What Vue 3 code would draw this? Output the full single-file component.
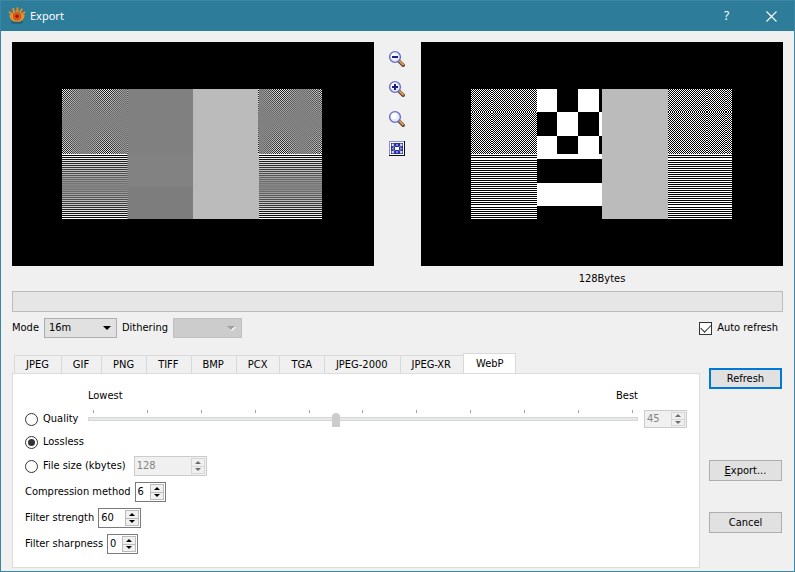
<script setup>
import { ref } from 'vue'

const tabs = ['JPEG', 'GIF', 'PNG', 'TIFF', 'BMP', 'PCX', 'TGA', 'JPEG-2000', 'JPEG-XR', 'WebP']
const activeTab = ref('WebP')
const mode = ref('16m')
const autoRefresh = ref(true)
const encoding = ref('lossless')
const quality = ref(45)
const fileSize = ref(128)
const filters = ref([
  { id: 'method', label: 'Compression method', value: 6, size: 'one' },
  { id: 'strength', label: 'Filter strength', value: 60, size: 'two' },
  { id: 'sharpness', label: 'Filter sharpness', value: 0, size: 'one' },
])
const lenses = [
  { label: 'Zoom out', sign: 'M4 7h6' },
  { label: 'Zoom in', sign: 'M4 7h6M7 4v6' },
  { label: 'Actual size', sign: '' },
]
</script>

<template>
  <div class="window">
    <header class="titlebar">
      <svg class="logo" width="18" height="18" viewBox="0 0 18 18">
        <ellipse cx="9" cy="15.500" rx="6.500" ry="1.300" fill="#245f76" />
        <g fill="none" stroke="#f08a1c" stroke-width="2" stroke-linecap="round">
          <path d="M6 4.500 5.200 2" />
          <path d="M9.300 3.600 9.500 1.200" />
          <path d="M12.400 4.500 13.600 2.400" />
          <path d="M3.400 6.800 1.600 5.200" />
          <path d="M14.800 6.800 16.400 5.400" />
        </g>
        <path d="M1.200 8.200Q4 8 5 5.600Q9 2.400 13 5.600Q14 8 16.800 8.200Q15.500 14.800 9 14.800Q2.500 14.800 1.200 8.200Z" fill="#f09024" />
        <circle cx="9" cy="9.200" r="4" fill="#8f4a2c" />
        <circle cx="9" cy="9.200" r="3.200" fill="#ea6a1c" />
        <circle cx="9" cy="9.200" r="2" fill="#b01208" />
      </svg>
      <h1>Export</h1>
      <button class="caption" type="button" aria-label="Help">?</button>
      <button class="caption" type="button" aria-label="Close">
        <svg width="11" height="11" viewBox="0 0 11 11"><path d="M.5.5l10 10M10.5.5l-10 10" stroke="#fff" stroke-width="1.1" /></svg>
      </button>
    </header>

    <main class="content">
      <section class="previews">
        <div class="preview">
          <svg width="260" height="130" viewBox="0 0 260 130" shape-rendering="crispEdges">
            <defs>
              <pattern id="checkA" width="2" height="2" patternUnits="userSpaceOnUse">
                <rect width="2" height="2" fill="#000" />
                <path d="M0 0h1v1h-1zM1 1h1v1h-1z" fill="#fff" />
              </pattern>
              <pattern id="linesA" width="2" height="2" patternUnits="userSpaceOnUse" y="1">
                <rect width="2" height="2" fill="#000" />
                <rect width="2" height="1" fill="#fff" />
              </pattern>
              <pattern id="linesB" width="2" height="2" patternUnits="userSpaceOnUse">
                <rect width="2" height="2" fill="#000" />
                <rect width="2" height="1" fill="#fff" />
              </pattern>
              <linearGradient id="fadeX" gradientUnits="userSpaceOnUse" x1="1" y1="0" x2="44" y2="0" spreadMethod="repeat">
                <stop offset="0" stop-color="#808080" stop-opacity="0" />
                <stop offset=".5" stop-color="#808080" />
                <stop offset="1" stop-color="#808080" stop-opacity="0" />
              </linearGradient>
              <linearGradient id="fadeX2" gradientUnits="userSpaceOnUse" x1="219" y1="0" x2="262" y2="0" spreadMethod="repeat">
                <stop offset="0" stop-color="#808080" stop-opacity="0" />
                <stop offset=".5" stop-color="#808080" />
                <stop offset="1" stop-color="#808080" stop-opacity="0" />
              </linearGradient>
              <linearGradient id="fadeY" x1="0" y1="0" x2="0" y2="1">
                <stop offset="0" stop-color="#808080" stop-opacity="0" />
                <stop offset=".5" stop-color="#808080" />
                <stop offset="1" stop-color="#808080" stop-opacity="0" />
              </linearGradient>
            </defs>
            <rect width="66" height="65" fill="url(#checkA)" />
            <rect width="65" height="65" fill="url(#fadeX)" />
            <rect width="66" height="65" fill="url(#fadeY)" />
            <rect y="65" width="66" height="32" fill="url(#linesA)" />
            <rect y="97" width="66" height="33" fill="url(#linesA)" />
            <rect y="65" width="66" height="65" fill="url(#fadeY)" />
            <rect x="65" width="1" height="130" fill="#808080" opacity=".5" />
            <rect x="66" width="65" height="65" fill="#808080" />
            <rect x="66" y="65" width="65" height="33" fill="#828282" />
            <rect x="66" y="98" width="65" height="32" fill="#7d7d7d" />
            <rect x="131" width="66" height="130" fill="#bbb" />
            <rect x="196" width="64" height="65" fill="url(#checkA)" />
            <rect x="197" width="63" height="65" fill="url(#fadeX2)" />
            <rect x="196" width="64" height="65" fill="url(#fadeY)" />
            <rect x="255" width="2" height="65" fill="#808080" opacity=".8" />
            <rect x="197" y="65" width="63" height="65" fill="url(#linesA)" />
            <rect x="197" y="65" width="63" height="65" fill="url(#fadeY)" />
          </svg>
        </div>

        <div class="tools">
          <button v-for="lens in lenses" :key="lens.label" type="button" :aria-label="lens.label">
            <svg width="18" height="18" viewBox="0 0 18 18">
              <path d="M11 11 15.200 15.200" stroke="#5f4034" stroke-width="3.600" stroke-linecap="round" />
              <path d="M11.300 10.800 15 14.500" stroke="#dd9a55" stroke-width="2" stroke-linecap="round" />
              <circle cx="7" cy="7" r="5.400" fill="#e6e9ff" stroke="#6670c4" stroke-width="1.400" />
              <circle cx="6" cy="6" r="3" fill="#fff" />
              <path :d="lens.sign" stroke="#191f8c" stroke-width="2" />
            </svg>
          </button>
          <button type="button" aria-label="Fit to window">
            <svg width="18" height="18" viewBox="0 0 18 18">
              <rect x="1" y="1" width="16" height="15" fill="#0c0c28" />
              <rect x="1" y="1" width="15" height="14" fill="#8890cc" />
              <rect x="2" y="2" width="14" height="13" fill="#fff" />
              <rect x="3" y="3" width="12" height="11" fill="#2a2e9c" />
              <rect x="7" y="7" width="4" height="3" fill="#fff" />
              <path d="M4 6V4h2l-1 1 1.500 1.500M14 6V4h-2l1 1-1.500 1.500M4 11v2h2l-1-1 1.500-1.500M14 11v2h-2l1-1-1.500-1.500" fill="#dfe2ff" stroke="#dfe2ff" stroke-width=".6" />
              <path d="M7.500 5.500 9 4l1.500 1.500zM7.500 11.500 9 13l1.500-1.500zM5.500 7 4 8.500 5.500 10zM12.500 7 14 8.500 12.500 10z" fill="#dfe2ff" />
            </svg>
          </button>
        </div>

        <div class="preview">
          <svg width="261" height="130" viewBox="0 0 261 130" shape-rendering="crispEdges">
            <defs>
              <pattern id="checkB" width="2" height="2" patternUnits="userSpaceOnUse">
                <rect width="2" height="2" fill="#000" />
                <path d="M0 0h1v1h-1zM1 1h1v1h-1z" fill="#fff" />
              </pattern>
              <pattern id="checkC" width="2" height="2" patternUnits="userSpaceOnUse">
                <rect width="2" height="2" fill="#000" />
                <path d="M1 0h1v1h-1zM0 1h1v1h-1z" fill="#fff" />
              </pattern>
            </defs>
            <rect width="21" height="23" fill="url(#checkB)" />
            <rect x="21" width="45" height="23" fill="url(#checkC)" />
            <rect y="23" width="21" height="42" fill="url(#checkC)" />
            <rect x="21" y="23" width="45" height="42" fill="url(#checkB)" />
            <rect x="66" width="65" height="130" fill="#000" />
            <path d="M66 0h20v23h-20zM107 0h21v23h-21zM86 23h21v24h-21zM128 23h3v24h-3zM66 47h20v18h-20zM107 47h21v18h-21zM66 65h65v5h-65zM66 94h65v23h-65z" fill="#fff" />
            <rect x="131" width="66" height="130" fill="#bbb" />
            <rect x="197" width="39" height="23" fill="url(#checkB)" />
            <rect x="236" width="19" height="23" fill="url(#checkC)" />
            <rect x="255" width="6" height="23" fill="url(#checkB)" />
            <rect x="197" y="23" width="39" height="42" fill="url(#checkC)" />
            <rect x="236" y="23" width="19" height="42" fill="url(#checkB)" />
            <rect x="255" y="23" width="6" height="42" fill="url(#checkC)" />
            <g fill="url(#linesA)">
              <rect y="65" width="66" height="5" />
              <rect y="117" width="66" height="13" />
              <rect x="197" y="65" width="64" height="5" />
              <rect x="197" y="117" width="64" height="13" />
            </g>
            <g fill="url(#linesB)">
              <rect y="70" width="66" height="47" />
              <rect x="197" y="70" width="64" height="47" />
            </g>
          </svg>
        </div>
        <output class="bytes">128Bytes</output>
      </section>

      <div class="progress" role="progressbar" aria-label="Progress"></div>

      <div class="options">
        <label for="mode">Mode</label>
        <div class="combo mode">
          <select id="mode" v-model="mode"><option>16m</option></select>
          <svg width="8" height="4" viewBox="0 0 8 4"><path d="M0 0h8L4 4z" fill="#000" /></svg>
        </div>
        <label for="dithering">Dithering</label>
        <div class="combo dither">
          <select id="dithering" disabled></select>
          <svg width="9" height="5" viewBox="0 0 9 5"><path d="M1 1h8L5 5z" fill="#fff" /><path d="M0 0h8L4 4z" fill="#a0a0a0" /></svg>
        </div>
        <label class="auto">
          <input v-model="autoRefresh" type="checkbox" />
          <span>Auto refresh</span>
        </label>
      </div>

      <section class="lower">
        <div class="tabbox">
          <div class="tabs" role="tablist">
            <button
              v-for="tab in tabs"
              :key="tab"
              type="button"
              role="tab"
              :aria-selected="tab === activeTab"
              :class="{ active: tab === activeTab }"
              @click="activeTab = tab"
            >{{ tab }}</button>
          </div>

          <div class="panel">
            <div class="quality-grid">
              <div class="ends"><span>Lowest</span><span>Best</span></div>
              <label class="radio"><input v-model="encoding" type="radio" value="quality" name="encoding" /><span>Quality</span></label>
              <div class="slider">
                <div class="ticks"><i v-for="n in 11" :key="n"></i></div>
                <input v-model="quality" type="range" min="0" max="100" disabled aria-label="Quality level" />
              </div>
              <div class="spin two short disabled">
                <input v-model="quality" type="text" disabled aria-label="Quality value" />
                <div class="arrows">
                  <button type="button" disabled aria-label="Increase"></button>
                  <button type="button" disabled aria-label="Decrease"></button>
                </div>
              </div>
            </div>
            <label class="radio lossless"><input v-model="encoding" type="radio" value="lossless" name="encoding" /><span>Lossless</span></label>
            <div class="row size">
              <label class="radio"><input v-model="encoding" type="radio" value="size" name="encoding" /><span>File size (kbytes)</span></label>
              <div class="spin wide disabled">
                <input v-model="fileSize" type="text" disabled aria-label="File size" />
                <div class="arrows">
                  <button type="button" disabled aria-label="Increase"></button>
                  <button type="button" disabled aria-label="Decrease"></button>
                </div>
              </div>
            </div>
            <div v-for="f in filters" :key="f.id" class="row filter">
              <label :for="f.id">{{ f.label }}</label>
              <div class="spin" :class="f.size">
                <input :id="f.id" v-model="f.value" type="text" />
                <div class="arrows">
                  <button type="button" aria-label="Increase" @click="f.value++"></button>
                  <button type="button" aria-label="Decrease" @click="f.value--"></button>
                </div>
              </div>
            </div>
          </div>
        </div>

        <div class="actions">
          <button class="primary" type="button">Refresh</button>
          <button class="export" type="button"><u>E</u>xport...</button>
          <button type="button">Cancel</button>
        </div>
      </section>
    </main>
  </div>
</template>

<style>
body {
  margin: 0;
  background: #f0f0f0;
}
</style>

<style scoped>
.window,
.window * {
  box-sizing: border-box;
}
.window {
  display: flex;
  flex-direction: column;
  min-height: 100vh;
  border: 1px solid #3d86a3;
  background: #f0f0f0;
  color: #000;
  font: 11px/14px Tahoma, "DejaVu Sans Condensed", "DejaVu Sans", sans-serif;
}
button,
input,
select {
  margin: 0;
  padding: 0;
  color: inherit;
  font: inherit;
}
svg {
  display: block;
}

.titlebar {
  display: flex;
  align-items: center;
  height: 30px;
  padding-left: 7px;
  background: #2d7d9a;
  color: #fff;
  font: 12px/16px "Segoe UI", "Noto Sans", "Open Sans", sans-serif;
}
.titlebar h1 {
  flex: 1;
  margin: 0 0 0 4px;
  font: inherit;
  font-size: 11px;
}
.caption {
  display: flex;
  align-items: center;
  justify-content: center;
  width: 45px;
  height: 30px;
  border: 0;
  background: none;
}

.content {
  display: flex;
  flex: 1;
  flex-direction: column;
  padding: 11px 11px 3px;
}
.previews {
  display: grid;
  grid-template-columns: 1fr 47px 1fr;
}
.preview {
  display: flex;
  justify-content: center;
  height: 224px;
  padding: 47px 2px 0 0;
  background: #000;
}
.tools {
  display: flex;
  flex-direction: column;
  align-items: center;
  gap: 12px;
  padding: 8px 2px 0 0;
}
.tools button {
  border: 0;
  background: none;
}
.bytes {
  grid-column: 3;
  padding: 6px 0 5px;
  text-align: center;
}
.progress {
  height: 21px;
  border: 1px solid #bcbcbc;
  background: #e6e6e6;
}

.options {
  display: flex;
  align-items: center;
  height: 20px;
  margin-top: 6px;
}
.combo {
  display: flex;
  align-items: center;
  height: 20px;
  margin: 0 5px;
  border: 1px solid #adadad;
  background: #e1e1e1;
}
.combo select {
  flex: 1;
  width: 100%;
  height: 18px;
  padding-left: 4px;
  border: 0;
  background: none;
  appearance: none;
}
.combo svg {
  flex: none;
  margin-right: 5px;
}
.mode {
  width: 73px;
}
.dither {
  width: 69px;
  border-color: #bfbfbf;
  background: #ccc;
}
.auto {
  display: flex;
  align-items: center;
  gap: 5px;
  margin-left: auto;
  padding-right: 5px;
}
.auto input {
  display: grid;
  place-items: center;
  width: 13px;
  height: 13px;
  border: 1px solid #333;
  background: #fff;
  appearance: none;
}
.auto input:checked::before {
  width: 9px;
  height: 5px;
  margin-top: -3px;
  border: solid #333;
  border-width: 0 0 1px 1px;
  content: "";
  transform: rotate(-45deg);
}

.lower {
  display: flex;
  flex: 1;
  gap: 9px;
  margin-top: 15px;
}
.tabbox {
  display: flex;
  flex: 1;
  flex-direction: column;
}
.tabs {
  display: flex;
  align-items: flex-end;
  height: 21px;
  margin-bottom: -1px;
  padding-left: 2px;
}
.tabs button {
  height: 19px;
  padding: 0 12px 0 11px;
  border: 1px solid #d9d9d9;
  border-right: 0;
  background: #f0f0f0;
  white-space: nowrap;
}
.tabs button.active {
  height: 21px;
  padding: 0 12px;
  border-right: 1px solid #d9d9d9;
  border-bottom: 0;
  background: #fff;
}
.panel {
  flex: 1;
  padding: 15px 12px 0;
  border: 1px solid #dcdcdc;
  background: #fff;
}
.quality-grid {
  display: grid;
  grid-template-columns: 57px 1fr 43px;
  column-gap: 6px;
}
.ends {
  display: flex;
  grid-column: 2;
  justify-content: space-between;
  height: 21px;
}
.quality-grid .radio {
  grid-row: 2;
  grid-column: 1;
}
.quality-grid .spin {
  grid-row: 2;
  grid-column: 3;
}
.radio {
  display: flex;
  align-items: center;
  gap: 5px;
  height: 18px;
  white-space: nowrap;
}
.radio input {
  display: grid;
  flex: none;
  place-items: center;
  width: 13px;
  height: 13px;
  border: 1px solid #333;
  border-radius: 50%;
  background: #fff;
  appearance: none;
}
.radio input:checked::before {
  width: 7px;
  height: 7px;
  border-radius: 50%;
  background: #333;
  content: "";
}
.slider {
  grid-row: 2;
  grid-column: 2;
}
.ticks {
  display: flex;
  justify-content: space-between;
  height: 3px;
  padding: 0 5px;
}
.ticks i {
  width: 1px;
  background: #a8a498;
}
.slider input {
  display: block;
  width: 100%;
  height: 12px;
  background: none;
  appearance: none;
}
.slider input::-webkit-slider-runnable-track {
  height: 4px;
  border: 1px solid #d6d6d6;
  background: #e7eaea;
}
.slider input::-webkit-slider-thumb {
  width: 8px;
  height: 14px;
  margin-top: -5px;
  border-radius: 4px 4px 0 0;
  background: #ccc;
  appearance: none;
}
.lossless {
  margin-top: 5px;
}
.row {
  display: flex;
  align-items: center;
  height: 20px;
  margin-top: 6px;
}
.row.size {
  gap: 8px;
  margin-top: 5px;
}
.filter {
  gap: 4px;
}

.spin {
  display: flex;
  height: 20px;
  padding: 1px;
  border: 1px solid #7a7a7a;
  background: #fff;
}
.spin input {
  flex: 1;
  width: 100%;
  min-width: 0;
  padding-left: 1px;
  border: 0;
  background: none;
}
.one {
  width: 31px;
}
.two {
  width: 43px;
}
.wide {
  width: 73px;
}
.short {
  height: 18px;
}
.disabled {
  border-color: #ccc;
  background: #f0f0f0;
  color: #838383;
}
.arrows {
  display: flex;
  flex: none;
  flex-direction: column;
  width: 14px;
}
.arrows button {
  display: flex;
  flex: 1;
  align-items: center;
  justify-content: center;
  min-height: 0;
  border: 1px solid #bbb;
  background: #f0f0f0;
}
.arrows button + button {
  border-top: 0;
}
.arrows button::before {
  border: solid transparent;
  border-width: 0 3px 3px;
  border-bottom-color: #000;
  content: "";
}
.arrows button + button::before {
  border-width: 3px 3px 0;
  border-top-color: #000;
}
.disabled .arrows button {
  border-color: #d6d6d6;
}
.disabled .arrows button::before {
  border-bottom-color: #6d6d6d;
}
.disabled .arrows button + button::before {
  border-top-color: #6d6d6d;
}

.actions {
  display: flex;
  flex-direction: column;
  gap: 31px;
  width: 74px;
  padding: 15px 1px 0 0;
}
.actions button {
  height: 21px;
  border: 1px solid #adadad;
  background: #e1e1e1;
}
.actions .primary {
  border: 2px solid #0078d7;
}
.actions .export {
  margin-top: 40px;
}
</style>
